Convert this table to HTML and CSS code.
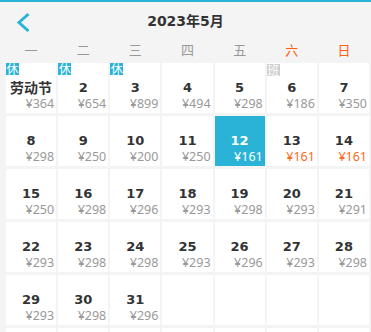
FILE: index.html
```html
<!DOCTYPE html>
<html lang="zh">
<head>
<meta charset="utf-8">
<title>2023年5月</title>
<link rel="stylesheet" href="styles.css">
</head>
<body>
<div class="page">
  <header class="header">
    <div class="header-left">
      <svg class="back" width="16" height="24" viewBox="0 0 16 24"><path d="M13.5 5 L4 13.5 L13.5 22" fill="none" stroke="#2ab3d7" stroke-width="3" stroke-linecap="butt" stroke-linejoin="miter"/></svg>
    </div>
    <div class="title">2023年5月</div>
    <div class="header-right"></div>
  </header>
  <div class="weekdays">
    <span>一</span><span>二</span><span>三</span><span>四</span><span>五</span><span class="wk">六</span><span class="wk">日</span>
  </div>
  <div class="grid">
    <div class="cell"><span class="badge rest">休</span><div class="day">劳动节</div><div class="price">¥364</div></div>
    <div class="cell"><span class="badge rest">休</span><div class="day">2</div><div class="price">¥654</div></div>
    <div class="cell"><span class="badge rest">休</span><div class="day">3</div><div class="price">¥899</div></div>
    <div class="cell"><div class="day">4</div><div class="price">¥494</div></div>
    <div class="cell"><div class="day">5</div><div class="price">¥298</div></div>
    <div class="cell"><span class="badge work">班</span><div class="day">6</div><div class="price">¥186</div></div>
    <div class="cell"><div class="day">7</div><div class="price">¥350</div></div>

    <div class="cell"><div class="day">8</div><div class="price">¥298</div></div>
    <div class="cell"><div class="day">9</div><div class="price">¥250</div></div>
    <div class="cell"><div class="day">10</div><div class="price">¥200</div></div>
    <div class="cell"><div class="day">11</div><div class="price">¥250</div></div>
    <div class="cell selected"><div class="day">12</div><div class="price">¥161</div></div>
    <div class="cell"><div class="day">13</div><div class="price low">¥161</div></div>
    <div class="cell"><div class="day">14</div><div class="price low">¥161</div></div>

    <div class="cell"><div class="day">15</div><div class="price">¥250</div></div>
    <div class="cell"><div class="day">16</div><div class="price">¥298</div></div>
    <div class="cell"><div class="day">17</div><div class="price">¥296</div></div>
    <div class="cell"><div class="day">18</div><div class="price">¥293</div></div>
    <div class="cell"><div class="day">19</div><div class="price">¥298</div></div>
    <div class="cell"><div class="day">20</div><div class="price">¥293</div></div>
    <div class="cell"><div class="day">21</div><div class="price">¥291</div></div>

    <div class="cell"><div class="day">22</div><div class="price">¥293</div></div>
    <div class="cell"><div class="day">23</div><div class="price">¥298</div></div>
    <div class="cell"><div class="day">24</div><div class="price">¥298</div></div>
    <div class="cell"><div class="day">25</div><div class="price">¥293</div></div>
    <div class="cell"><div class="day">26</div><div class="price">¥296</div></div>
    <div class="cell"><div class="day">27</div><div class="price">¥293</div></div>
    <div class="cell"><div class="day">28</div><div class="price">¥298</div></div>

    <div class="cell"><div class="day">29</div><div class="price">¥293</div></div>
    <div class="cell"><div class="day">30</div><div class="price">¥298</div></div>
    <div class="cell"><div class="day">31</div><div class="price">¥296</div></div>
    <div class="cell"></div>
    <div class="cell"></div>
    <div class="cell"></div>
    <div class="cell"></div>

    <div class="cell"></div>
    <div class="cell"></div>
    <div class="cell"></div>
    <div class="cell"></div>
    <div class="cell"></div>
    <div class="cell"></div>
    <div class="cell"></div>
  </div>
</div>
</body>
</html>
```
FILE: styles.css
```css
html, body {
  margin: 0;
  padding: 0;
  background: #f4f4f4;
  overflow: hidden;
}
.page {
  width: 371px;
  height: 332px;
  overflow: hidden;
  border-top: 2px solid #2ab3d7;
  box-sizing: border-box;
  font-family: "Noto Sans CJK SC", sans-serif;
}
.header {
  height: 37px;
  display: grid;
  grid-template-columns: 1fr auto 1fr;
  align-items: center;
}
.header-left {
  padding-left: 15px;
  display: flex;
  align-items: center;
}
.back {
  display: block;
}
.title {
  font-family: "DejaVu Sans", "Noto Sans CJK SC", sans-serif;
  font-weight: bold;
  font-size: 14px;
  color: #333;
  line-height: 20px;
}
.weekdays {
  display: grid;
  grid-template-columns: repeat(7, 1fr);
  column-gap: 2px;
  padding: 0 2px 0 6px;
  height: 22px;
  line-height: 22px;
  font-size: 13px;
  color: #999;
  text-align: center;
}
.weekdays .wk {
  color: #ff5f0f;
}
.grid {
  display: grid;
  grid-template-columns: repeat(7, 1fr);
  grid-auto-rows: 50px;
  column-gap: 2px;
  row-gap: 3px;
  padding: 2px 2px 0 6px;
}
.cell {
  background: #fff;
  position: relative;
  display: flex;
  flex-direction: column;
  padding-top: 17px;
  box-sizing: border-box;
}
.day {
  font-family: "DejaVu Sans", "Noto Sans CJK SC", sans-serif;
  font-weight: bold;
  font-size: 13px;
  line-height: 16px;
  height: 16px;
  color: #333;
  text-align: center;
  white-space: nowrap;
}
.cell:first-child .day {
  font-size: 14px;
  font-weight: 600;
}
.price {
  font-family: "Noto Sans", "Noto Sans CJK SC", sans-serif;
  font-size: 12.5px;
  line-height: 16px;
  height: 16px;
  color: #999;
  text-align: right;
  padding-right: 2px;
}
.price.low {
  color: #ff6a1a;
}
.selected {
  background: #2ab3d7;
}
.selected .day,
.selected .price {
  color: #fff;
}
.badge {
  position: absolute;
  left: 0;
  top: 0;
  width: 13px;
  height: 12px;
  font-size: 12px;
  line-height: 12px;
  text-align: center;
  color: #fff;
  font-family: "Noto Sans CJK SC", sans-serif;
}
.badge.rest {
  background: #2ab3d7;
}
.badge.work {
  background: #cfcfcf;
  top: 1px;
}
```
